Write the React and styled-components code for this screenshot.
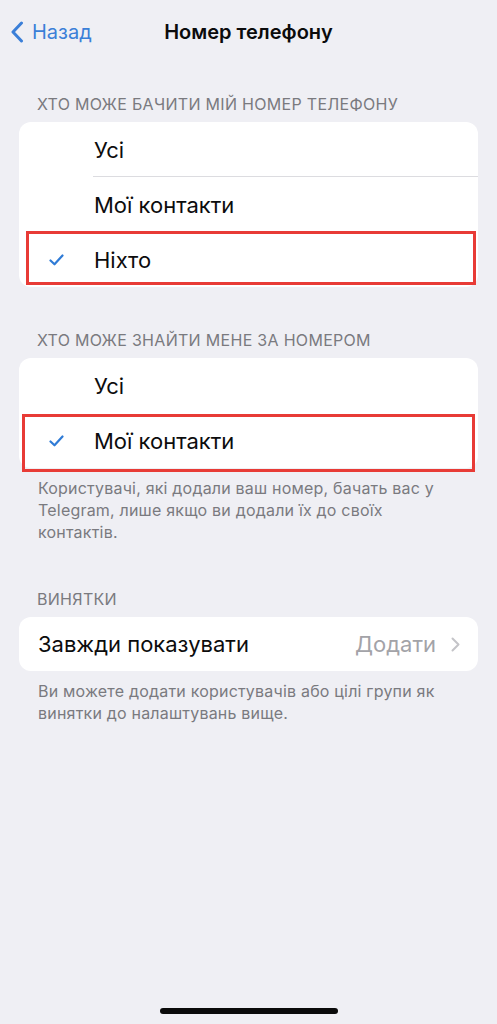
import React from "react";
import styled, { createGlobalStyle } from "styled-components";

const GlobalStyle = createGlobalStyle`
  html, body { margin: 0; padding: 0; background: #efeff4; }
  body { font-family: Inter, "Noto Sans", Roboto, sans-serif; -webkit-font-smoothing: antialiased; }
  * { box-sizing: border-box; }
`;

const Page = styled.div`
  width: 497px;
  min-height: 1024px;
  display: flex;
  flex-direction: column;
  background: #efeff4;
`;

const NavBar = styled.header`
  height: 64px;
  display: grid;
  grid-template-columns: 1fr auto 1fr;
  align-items: center;
`;

const BackButton = styled.div`
  display: flex;
  align-items: center;
  gap: 8px;
  padding-left: 10px;
  color: #3b7fd8;
  font-size: 20px;
`;

const Title = styled.h1`
  margin: 0;
  font-size: 20px;
  font-weight: 600;
  color: #0b0b0c;
`;

const Section = styled.section`
  padding: 0 19px;
  margin-top: ${(p) => p.$top}px;
`;

const SectionHeader = styled.div`
  padding: 0 18px 8px;
  font-size: 16px;
  line-height: 20px;
  color: #7a7a7f;
  text-transform: uppercase;
  letter-spacing: 0.3px;
`;

const Card = styled.div`
  background: #ffffff;
  border-radius: 12px;
`;

const Row = styled.div`
  position: relative;
  height: ${(p) => p.$h ?? 55}px;
  display: flex;
  align-items: center;
  padding-left: ${(p) => p.$pl ?? 19}px;
  padding-right: 18px;
  font-size: 22px;
  color: #0c0c0d;

  ${(p) =>
    p.$separator &&
    `
    &::before {
      content: "";
      position: absolute;
      left: 74px;
      right: 0;
      bottom: 0;
      height: 1px;
      background: #dcdce0;
    }
  `}

  ${(p) =>
    p.$highlight &&
    `
    &::after {
      content: "";
      position: absolute;
      left: ${p.$highlight.l}px;
      right: ${p.$highlight.r}px;
      top: ${p.$highlight.t}px;
      bottom: ${p.$highlight.b}px;
      border: 3px solid #e83b36;
      pointer-events: none;
    }
  `}
`;

const CheckSlot = styled.span`
  width: 75px;
  display: flex;
  align-items: center;
  padding-left: 30px;
  flex-shrink: 0;
`;

const Label = styled.span`
  flex: 1;
`;

const Value = styled.span`
  color: #a3a3a8;
  font-size: 22px;
  margin-right: 15px;
`;

const Footer = styled.p`
  margin: 0;
  padding: ${(p) => p.$pt}px 30px 0 38px;
  font-size: 16px;
  line-height: 22px;
  color: #7a7a7f;
  letter-spacing: 0.2px;
`;

const Spacer = styled.div`
  flex: 1;
`;

const HomeIndicator = styled.div`
  align-self: center;
  width: 178px;
  height: 6px;
  border-radius: 3px;
  background: #0a0a0a;
  margin-bottom: 10px;
`;

const BackChevron = () => (
  <svg width="14" height="22" viewBox="0 0 14 22" fill="none">
    <path d="M11.5 2 L3 11 L11.5 20" stroke="#3b7fd8" strokeWidth="3" strokeLinecap="round" strokeLinejoin="round" />
  </svg>
);

const Check = () => (
  <svg width="15" height="12" viewBox="0 0 15 12" fill="none">
    <path d="M1.5 6.5 L5.5 10.3 L13.5 1.5" stroke="#2f7bd6" strokeWidth="2.2" strokeLinecap="round" strokeLinejoin="round" />
  </svg>
);

const RightChevron = () => (
  <svg width="9" height="15" viewBox="0 0 9 15" fill="none">
    <path d="M1.5 1.5 L7.5 7.5 L1.5 13.5" stroke="#c4c4c8" strokeWidth="2" strokeLinecap="round" strokeLinejoin="round" />
  </svg>
);

const Option = ({ label, checked, separator, highlight }) => (
  <Row $pl={0} $separator={separator} $highlight={highlight}>
    <CheckSlot>{checked && <Check />}</CheckSlot>
    <Label>{label}</Label>
  </Row>
);

export default function App() {
  return (
    <Page>
      <GlobalStyle />
      <NavBar>
        <BackButton>
          <BackChevron />
          <span>Назад</span>
        </BackButton>
        <Title>Номер телефону</Title>
        <div />
      </NavBar>

      <Section $top={30}>
        <SectionHeader>Хто може бачити мій номер телефону</SectionHeader>
        <Card>
          <Option label="Усі" separator />
          <Option label="Мої контакти" />
          <Option label="Ніхто" checked highlight={{ l: 7, r: 2, t: -1, b: 2 }} />
        </Card>
      </Section>

      <Section $top={43}>
        <SectionHeader>Хто може знайти мене за номером</SectionHeader>
        <Card>
          <Option label="Усі" />
          <Option label="Мої контакти" checked highlight={{ l: 3, r: 3, t: 1, b: -4 }} />
        </Card>
      </Section>
      <Footer $pt={9}>
        Користувачі, які додали ваш номер, бачать вас у Telegram, лише якщо ви додали їх до своїх контактів.
      </Footer>

      <Section $top={46}>
        <SectionHeader>Винятки</SectionHeader>
        <Card>
          <Row $h={54}>
            <Label>Завжди показувати</Label>
            <Value>Додати</Value>
            <RightChevron />
          </Row>
        </Card>
      </Section>
      <Footer $pt={9}>
        Ви можете додати користувачів або цілі групи як винятки до налаштувань вище.
      </Footer>

      <Spacer />
      <HomeIndicator />
    </Page>
  );
}
